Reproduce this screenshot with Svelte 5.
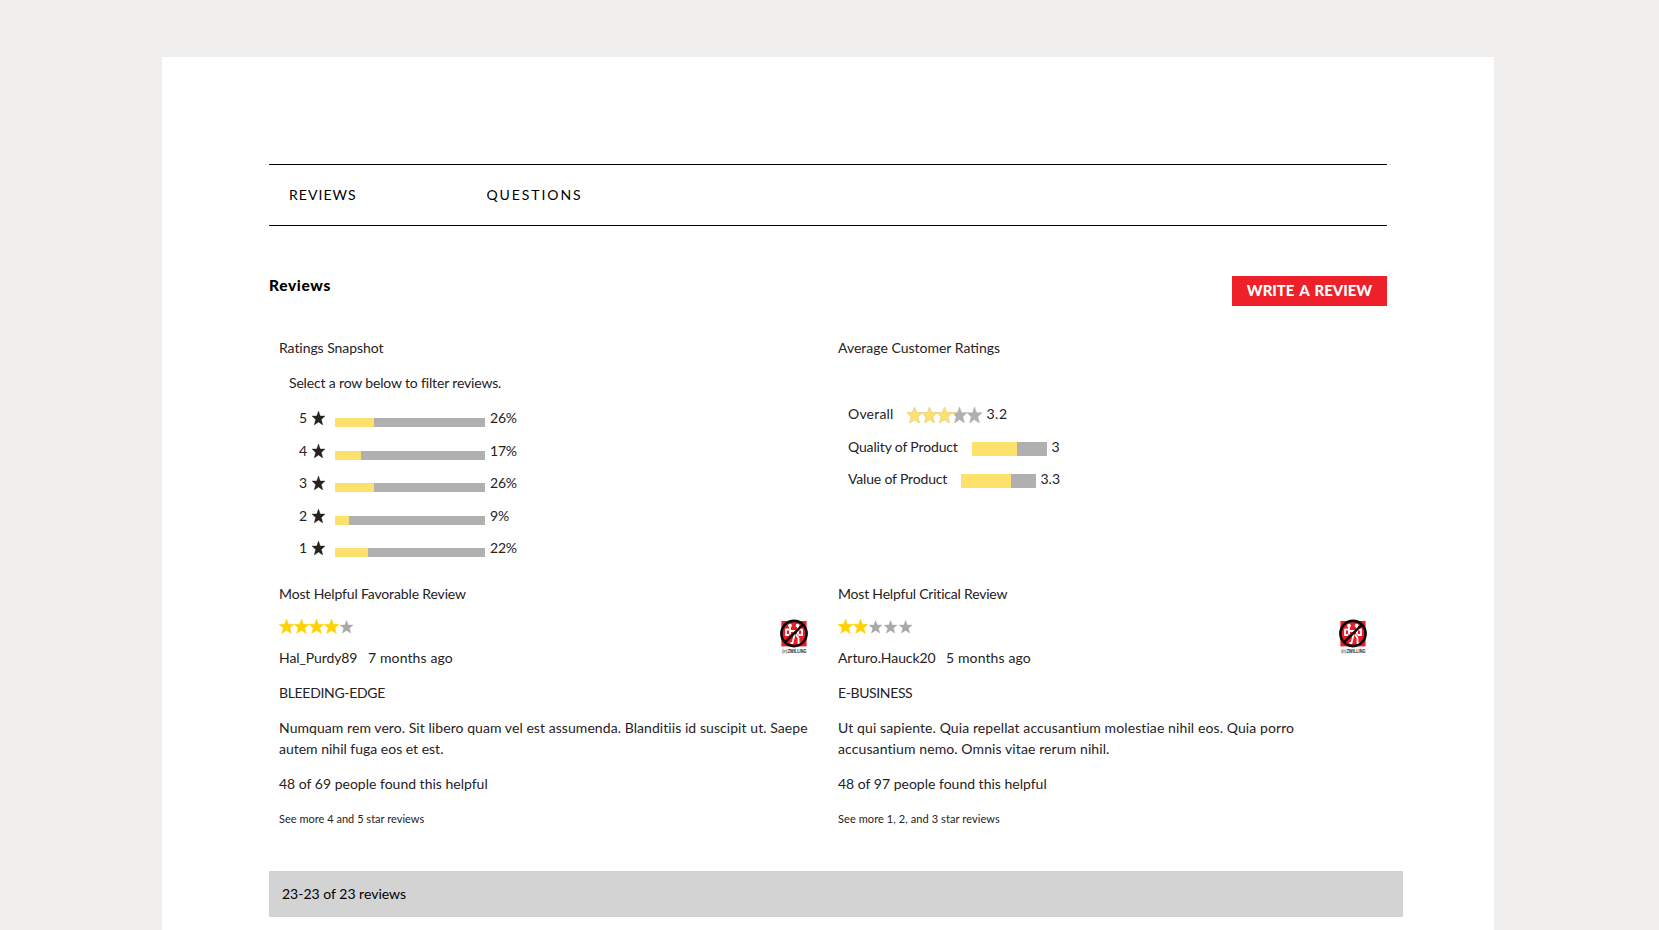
<script>
  const histogram = [
    { stars: 5, pct: 26, fill: 39 },
    { stars: 4, pct: 17, fill: 26 },
    { stars: 3, pct: 26, fill: 39 },
    { stars: 2, pct: 9, fill: 14 },
    { stars: 1, pct: 22, fill: 33 }
  ];

  const averages = [
    { label: 'Quality of Product', score: '3', fill: 45, track: -0.15, width: 124 },
    { label: 'Value of Product', score: '3.3', fill: 50, track: -0.17, width: 113 }
  ];

  const reviews = [
    {
      heading: ['Most Helpful Favorable Review', -0.145],
      rating: 4,
      author: ['Hal_Purdy89', -0.1],
      authorWidth: 89,
      date: '7 months ago',
      title: ['BLEEDING-EDGE', -0.32],
      body: [
        ['Numquam rem vero. Sit libero quam vel est assumenda. Blanditiis id suscipit ut. Saepe', 0.063],
        ['autem nihil fuga eos et est.', -0.01]
      ],
      helpful: ['48 of 69 people found this helpful', 0],
      more: ['See more 4 and 5 star reviews', 0.02]
    },
    {
      heading: ['Most Helpful Critical Review', -0.205],
      rating: 2,
      author: ['Arturo.Hauck20', -0.08],
      authorWidth: 108,
      date: '5 months ago',
      title: ['E-BUSINESS', -0.38],
      body: [
        ['Ut qui sapiente. Quia repellat accusantium molestiae nihil eos. Quia porro', 0.1],
        ['accusantium nemo. Omnis vitae rerum nihil.', 0.1]
      ],
      helpful: ['48 of 97 people found this helpful', 0],
      more: ['See more 1, 2, and 3 star reviews', 0.09]
    }
  ];

  const slots = [0, 1, 2, 3, 4];
  const star = 'M7.5 0 9.5 5.2H15L10.8 8.9 12.4 14.6 7.5 11.5 2.6 14.6 4.2 8.9 0 5.2H5.5Z';
</script>

{#snippet line([text, track])}
  <span style:letter-spacing="{track}px">{text}</span>
{/snippet}

<main class="page">
  <nav class="tabs">
    <span class="tab first">REVIEWS</span>
    <span class="tab second">QUESTIONS</span>
  </nav>

  <header class="head">
    <h2>Reviews</h2>
    <button>WRITE A REVIEW</button>
  </header>

  <div class="columns summary">
    <section>
      <p class="t-snapshot">Ratings Snapshot</p>
      <p class="hint">Select a row below to filter reviews.</p>
      <div class="histogram">
        {#each histogram as row}
          <div class="hrow">
            <span class="num">{row.stars}</span>
            <svg class="dark" width="13" height="14" viewBox="0 0 15 14.6" preserveAspectRatio="none"><path d={star} /></svg>
            <span class="bar thin"><i style:width="{row.fill}px"></i></span>
            <span class="pct">{row.pct}%</span>
          </div>
        {/each}
      </div>
    </section>

    <section>
      <p>Average Customer Ratings</p>
      <div class="averages">
        <div class="arow">
          <span class="overall">Overall</span>
          <svg class="overall-stars" width="75" height="16" viewBox="0 0 75 14.6" preserveAspectRatio="none">
            <defs>
              <clipPath id="lit"><rect width="48" height="16" /></clipPath>
            </defs>
            {#each slots as i}<path d={star} fill="#b0b0b0" stroke="#b0b0b0" stroke-width=".5" transform="translate({i * 15} 0)" />{/each}
            <g clip-path="url(#lit)">
              {#each slots as i}<path d={star} fill="#fde16d" stroke="#fde16d" stroke-width=".5" transform="translate({i * 15} 0)" />{/each}
            </g>
          </svg>
          <span class="score wide">3.2</span>
        </div>
        {#each averages as a}
          <div class="arow">
            <span style:width="{a.width}px" style:letter-spacing="{a.track}px">{a.label}</span>
            <span class="bar thick"><i style:width="{a.fill}px"></i></span>
            <span class="score">{a.score}</span>
          </div>
        {/each}
      </div>
    </section>
  </div>

  <div class="columns helpful">
    {#each reviews as r}
      <section>
        <p>{@render line(r.heading)}</p>
        <div class="meta">
          <div>
            <svg class="rating" width="75" height="15" viewBox="0 0 75 15">
              {#each slots as i}
                {#if i < r.rating}
                  <path d={star} fill="#ffd200" stroke="#ffd200" stroke-width=".4" transform="translate({i * 15} 0)" />
                {:else}
                  <path d={star} fill="#a9a9a9" stroke="#a9a9a9" stroke-width=".3" transform="translate({i * 15 + 1} 1.3) scale(.88)" />
                {/if}
              {/each}
            </svg>
            <p class="by"><span style:width="{r.authorWidth}px" style:letter-spacing="{r.author[1]}px">{r.author[0]}</span><span class="date">{r.date}</span></p>
          </div>
          <svg class="logo" width="28" height="36" viewBox="0 0 28 36">
            <rect x="1.4" y="2" width="25.2" height="25.4" fill="#ed1c24" />
            <g fill="none" stroke="#fff" stroke-width="1.8">
              <path d="M10 8V15.5M18 8V15.5M5.5 10.5H11M17 10.5H22.5M6 10V16H9M22 10V16H18.5M9.5 12H18.5" />
              <path d="M14 15V18L12.5 24H10.5M16 15.5 18.5 19V24.5H20.5" />
            </g>
            <circle cx="10" cy="6.6" r="1.9" fill="#fff" />
            <circle cx="17.6" cy="6.6" r="1.9" fill="#fff" />
            <circle cx="14" cy="14.5" r="12.6" fill="none" stroke="#080808" stroke-width="2.6" />
            <path d="M5 23.4 23 5.6" stroke="#080808" stroke-width="2.4" />
            <text x="2" y="34" textLength="24.5" lengthAdjust="spacingAndGlyphs"><tspan class="in">(in)</tspan>ZWILLING</text>
          </svg>
        </div>
        <p>{@render line(r.title)}</p>
        <p class="body">{#each r.body as b}{@render line(b)}{/each}</p>
        <p>{@render line(r.helpful)}</p>
        <p class="more">{@render line(r.more)}</p>
      </section>
    {/each}
  </div>

  <footer>23-23 of 23 reviews</footer>
</main>

<style>
  :global(body) {
    background: #f0efed;
    overflow: hidden;
  }
  .page {
    box-sizing: border-box;
    width: 1332px;
    height: 873px;
    margin: 57px 0 0 162px;
    padding: 107px 0 0 107px;
    background: #fff;
    color: #26221e;
    font: 14px/21px Lato, "Open Sans", sans-serif;
    overflow: hidden;
    white-space: nowrap;
  }
  .tabs {
    box-sizing: border-box;
    display: flex;
    width: 1118px;
    height: 62px;
    padding: 19px 0 0 20px;
    border-top: 1px solid #000;
    border-bottom: 1px solid #000;
    color: #000;
  }
  .first { width: 197.5px; letter-spacing: 1.05px; }
  .second { letter-spacing: 1.9px; }
  .head {
    display: flex;
    justify-content: space-between;
    width: 1118px;
    height: 61px;
    margin-top: 50px;
    color: #000;
  }
  h2 {
    margin: -3px 0 0;
    font-size: 15.5px;
    font-weight: 900;
    line-height: 24px;
    letter-spacing: 0.65px;
  }
  button {
    width: 155px;
    height: 30px;
    padding: 0 0 1px;
    border: 0;
    background: #ee2029;
    color: #fff;
    font: 900 15px/29px Lato, "Open Sans", sans-serif;
    letter-spacing: -0.05px;
    word-spacing: 1.8px;
  }
  .columns {
    display: grid;
    grid-template-columns: 559px 559px;
    padding-left: 10px;
  }
  .columns p { margin: 0 0 14px; }
  .summary { height: 246px; }
  .t-snapshot { letter-spacing: -0.064px; }
  .columns .hint {
    padding-left: 10px;
    letter-spacing: -0.161px;
  }
  .histogram { padding-left: 20px; }
  .hrow {
    display: flex;
    height: 32.5px;
  }
  .num { width: 13px; }
  .dark {
    margin-top: 4px;
    fill: #26221e;
    stroke: #26221e;
    stroke-width: 0.4;
  }
  .bar {
    display: block;
    background: #b0b0b0;
  }
  .bar i {
    display: block;
    height: 100%;
    background: #fde16d;
  }
  .thin {
    width: 150px;
    height: 9px;
    margin: 11px 5px 0 10px;
  }
  .pct { letter-spacing: -0.2px; }
  .averages { padding: 31px 0 0 10px; }
  .arow {
    display: flex;
    height: 32.5px;
  }
  .overall {
    width: 59px;
    letter-spacing: 0.2px;
  }
  .overall-stars { margin-top: 4px; }
  .thick {
    width: 75px;
    height: 14px;
    margin-top: 6px;
  }
  .score { margin-left: 4.5px; }
  .wide { letter-spacing: 0.5px; }
  .meta {
    display: flex;
    justify-content: space-between;
    width: 529px;
    height: 63px;
    padding-top: 1px;
  }
  .rating {
    display: block;
    margin-bottom: 13px;
  }
  .by { display: flex; }
  .date { letter-spacing: 0.12px; }
  .logo text {
    font: bold 4.5px "Liberation Sans", sans-serif;
    fill: #222;
  }
  .logo .in { font-weight: normal; }
  .body span {
    display: block;
    height: 21px;
  }
  .more { font-size: 11px; }
  footer {
    width: 1121px;
    height: 46px;
    margin-top: 28px;
    padding-left: 13px;
    background: #d3d3d3;
    color: #000;
    line-height: 46px;
  }
</style>
